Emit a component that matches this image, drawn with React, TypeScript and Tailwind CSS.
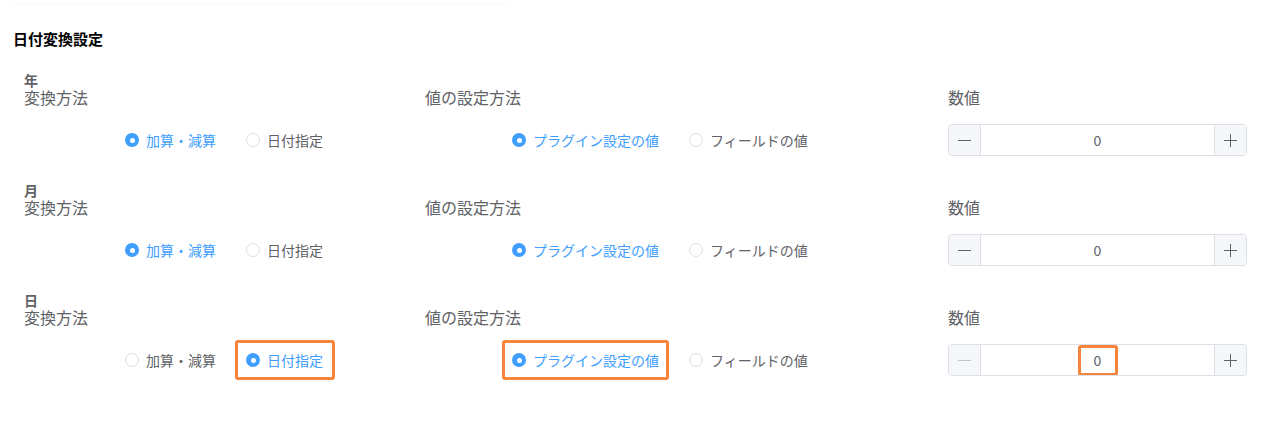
import type { ReactNode } from "react";

const FONT = { fontFamily: '"Noto Sans CJK JP", "Noto Sans", sans-serif' };

interface RowDef {
  unit: string;
  method: "calc" | "date";
  highlight?: boolean;
}

const rows: RowDef[] = [
  { unit: "年", method: "calc" },
  { unit: "月", method: "calc" },
  { unit: "日", method: "date", highlight: true },
];

// orange annotation frame drawn over a control
function Mark({ className }: { className: string }) {
  return <span className={`pointer-events-none absolute rounded-[3px] border-[3px] border-[#f5843c] ${className}`} />;
}

function Radio({ label, checked, mark }: { label: string; checked: boolean; mark?: ReactNode }) {
  return (
    <span className="relative mr-[30px] inline-flex h-5 items-center">
      {checked ? (
        <span className="flex size-[14px] items-center justify-center rounded-full bg-[#409eff]">
          <span className="size-[5px] rounded-full bg-white" />
        </span>
      ) : (
        <span className="size-[14px] rounded-full border border-[#dcdfe6] bg-white" />
      )}
      <span className={`ml-[7px] text-[14px] leading-5 ${checked ? "text-[#409eff]" : "text-[#606266]"}`}>{label}</span>
      {mark}
    </span>
  );
}

function NumberInput({ disabledMinus, highlight }: { disabledMinus?: boolean; highlight?: boolean }) {
  return (
    <div className="flex h-8 w-[299px] overflow-hidden rounded border border-[#dcdfe6]">
      <div className="flex w-8 items-center justify-center border-r border-[#dcdfe6] bg-[#f5f7fa]">
        <span className={`h-px w-[13px] ${disabledMinus ? "bg-[#c0c4cc]" : "bg-[#606266]"}`} />
      </div>
      <div className="relative flex flex-1 items-center justify-center bg-white text-[14px] text-[#606266]">
        0
        {highlight && <Mark className="left-1/2 top-0 h-[31px] w-[40px] -translate-x-1/2" />}
      </div>
      <div className="relative flex w-8 items-center justify-center border-l border-[#dcdfe6] bg-[#f5f7fa]">
        <span className="absolute h-px w-[13px] bg-[#606266]" />
        <span className="absolute h-[13px] w-px bg-[#606266]" />
      </div>
    </div>
  );
}

function Row({ row }: { row: RowDef }) {
  return (
    <div>
      <div className="h-[14px] text-[14px] font-bold leading-[14px] text-[#606266]">{row.unit}</div>
      <div className="grid h-5 grid-cols-[401px_523px_299px] items-center text-[16px] leading-[18px] text-[#606266]">
        <div>変換方法</div>
        <div>値の設定方法</div>
        <div>数値</div>
      </div>
      <div className="mt-[17px] grid h-8 grid-cols-[401px_523px_299px] items-center">
        <div className="flex items-center pl-[101px]">
          <Radio label="加算・減算" checked={row.method === "calc"} />
          <Radio
            label="日付指定"
            checked={row.method === "date"}
            mark={row.highlight && <Mark className="-left-[11px] -right-[12px] -top-[10px] -bottom-[10px]" />}
          />
        </div>
        <div className="flex items-center pl-[87px]">
          <Radio
            label="プラグイン設定の値"
            checked
            mark={row.highlight && <Mark className="-left-[10px] -right-[10px] -top-[10px] -bottom-[10px]" />}
          />
          <Radio label="フィールドの値" checked={false} />
        </div>
        <NumberInput disabledMinus={row.highlight} highlight={row.highlight} />
      </div>
    </div>
  );
}

export default function App() {
  return (
    <div className="h-[421px] w-[1273px] overflow-hidden bg-white" style={FONT}>
      <div className="ml-3 h-[2px] w-[498px] rounded-b-lg bg-white shadow-[0_2px_8px_rgba(0,0,0,0.08)]" />
      <h2 className="ml-[13px] mt-[27px] text-[15px] font-bold leading-5 text-black">日付変換設定</h2>
      <div className="ml-6 mt-6 flex flex-col gap-[27px]">
        {rows.map((r) => (
          <Row key={r.unit} row={r} />
        ))}
      </div>
    </div>
  );
}
